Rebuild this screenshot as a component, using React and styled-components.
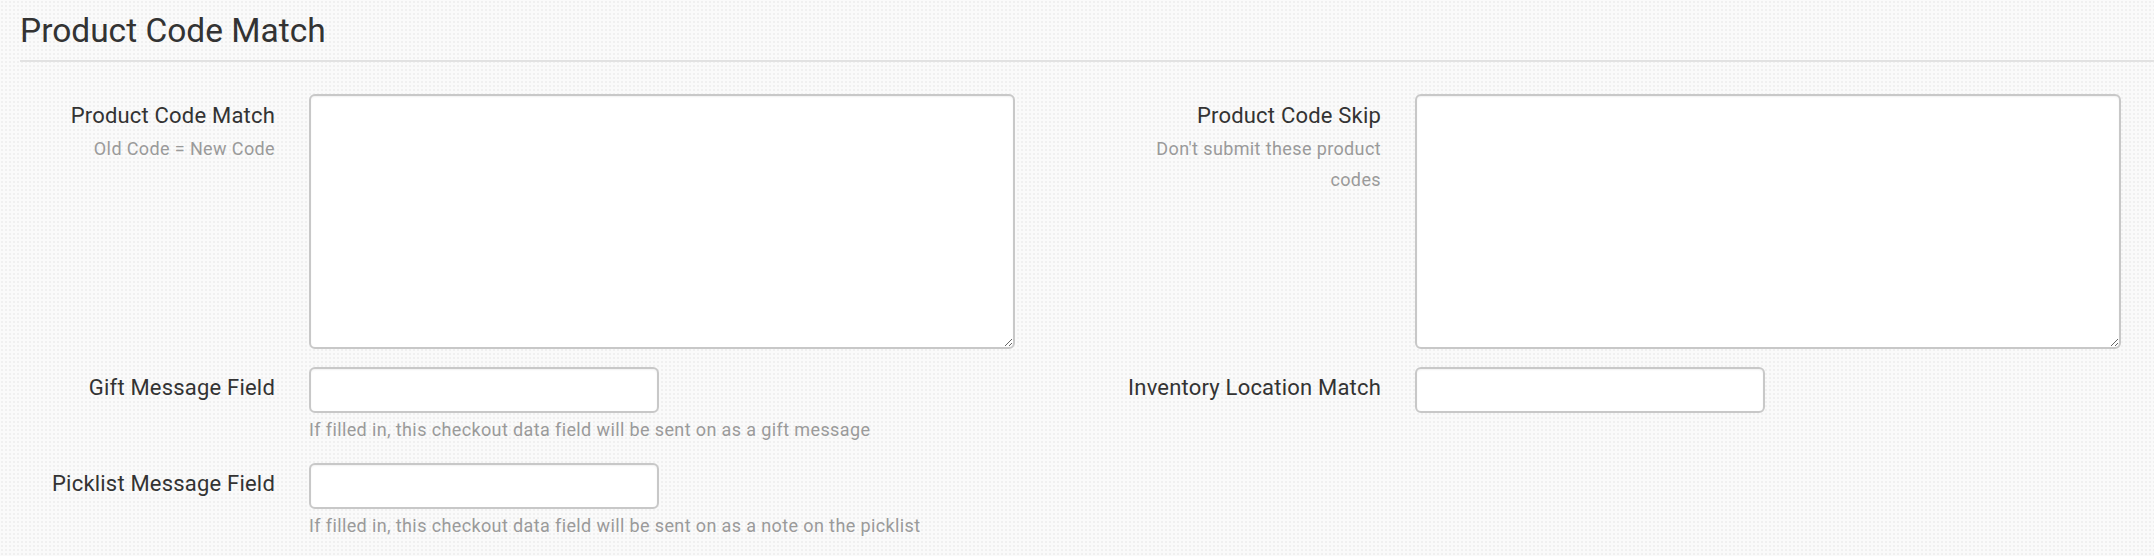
import React from 'react';
import styled, { createGlobalStyle } from 'styled-components';

// CSS
const GlobalStyle = createGlobalStyle`
html, body {
margin: 0;
padding: 0;
}
body {
font-family: Roboto, "Noto Sans", "Liberation Sans", sans-serif;
color: #333;
background-color: #fafafa;
background-image: radial-gradient(circle, #f0f0f0 0.8px, transparent 1.1px);
background-size: 4px 4px;
}
`

const Page = styled.div`
width: 2154px;
height: 556px;
overflow: hidden;
`

const Header = styled.div`
margin-left: 20px;
padding-top: 11px;
border-bottom: 2px solid #e2e2e2;
height: 62px;
box-sizing: border-box;
`

const Title = styled.h1`
margin: 0;
font-size: 33.5px;
font-weight: 400;
line-height: 40px;
color: #333;
`

const Form = styled.div`
display: flex;
padding-top: 32px;
`

const Column = styled.div`
display: flex;
flex-direction: column;
gap: 18px;
`

const Row = styled.div`
display: flex;
align-items: flex-start;
`

const LabelBox = styled.div`
width: ${props => props.width}px;
box-sizing: border-box;
padding-right: 34px;
padding-top: ${props => props.top}px;
display: flex;
justify-content: flex-end;
flex-shrink: 0;
`

const LabelText = styled.div`
width: 266px;
text-align: right;
`

const Label = styled.label`
display: block;
font-size: 22px;
letter-spacing: 0.2px;
line-height: 31px;
color: #333;
`

const Hint = styled.div`
font-size: 18px;
letter-spacing: 0.38px;
line-height: 31px;
color: #9a9a9a;
margin-top: ${props => props.gap || 0}px;
`

const TextArea = styled.textarea`
display: block;
width: 706px;
height: 255px;
box-sizing: border-box;
border: 2px solid #c8c8c8;
border-radius: 6px;
background: #fff;
box-shadow: inset 0 1px 2px rgba(0, 0, 0, 0.06);
font-family: inherit;
font-size: 20px;
padding: 8px 12px;
margin: 0;
outline: none;
resize: vertical;
`

const Input = styled.input`
display: block;
width: 350px;
height: 46px;
box-sizing: border-box;
border: 2px solid #c8c8c8;
border-radius: 6px;
background: #fff;
box-shadow: inset 0 1px 2px rgba(0, 0, 0, 0.06);
font-family: inherit;
font-size: 20px;
padding: 6px 12px;
margin: 0;
outline: none;
`

const Field = styled.div`
display: flex;
flex-direction: column;
`

// Code for Component starts here
function FormRow({ labelWidth, top, label, note, children }) {
    return (
        <Row>
            <LabelBox width={labelWidth} top={top}>
                <LabelText>
                    <Label>{label}</Label>
                    {note && <Hint gap={2}>{note}</Hint>}
                </LabelText>
            </LabelBox>
            {children}
        </Row>
    )
}

function App() {

    return (
        <Page>
            <GlobalStyle />
            <Header>
                <Title>Product Code Match</Title>
            </Header>
            <Form>
                <Column>
                    <FormRow labelWidth={309} top={6} label="Product Code Match" note="Old Code = New Code">
                        <TextArea />
                    </FormRow>
                    <FormRow labelWidth={309} top={5} label="Gift Message Field">
                        <Field>
                            <Input type="text" />
                            <Hint gap={1}>If filled in, this checkout data field will be sent on as a gift message</Hint>
                        </Field>
                    </FormRow>
                    <FormRow labelWidth={309} top={5} label="Picklist Message Field">
                        <Field>
                            <Input type="text" />
                            <Hint gap={1}>If filled in, this checkout data field will be sent on as a note on the picklist</Hint>
                        </Field>
                    </FormRow>
                </Column>
                <Column>
                    <FormRow labelWidth={400} top={6} label="Product Code Skip" note="Don't submit these product codes">
                        <TextArea />
                    </FormRow>
                    <FormRow labelWidth={400} top={5} label="Inventory Location Match">
                        <Input type="text" />
                    </FormRow>
                </Column>
            </Form>
        </Page>
    )

}

export default App;
